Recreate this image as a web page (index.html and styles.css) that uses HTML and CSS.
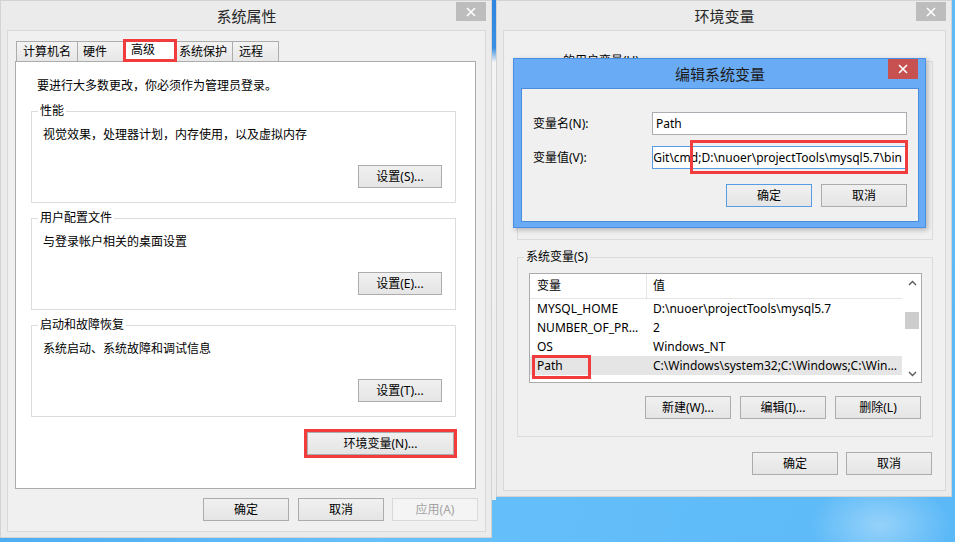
FILE: index.html
```html
<!DOCTYPE html>
<html lang="zh-CN">
<head>
    <meta charset="UTF-8">
    <title>系统属性 - 环境变量</title>
    <link rel="stylesheet" href="styles.css">
</head>
<body>

<div class="desktop">
    <div class="window sys-props">
        <div class="titlebar">系统属性
            <span class="close"><svg width="10" height="10" viewBox="0 0 10 10"><path d="M1 1L9 9M9 1L1 9" stroke="#fff" stroke-width="1.6"/></svg></span>
        </div>
        <div class="client sys-client">
            <div class="tabs">
                <div class="tab">计算机名</div>
                <div class="tab">硬件</div>
                <div class="tab active">高级</div>
                <div class="tab">系统保护</div>
                <div class="tab">远程</div>
            </div>
            <div class="tab-panel">
                <p class="notice">要进行大多数更改，你必须作为管理员登录。</p>
                <fieldset class="group">
                    <legend>性能</legend>
                    <p class="desc">视觉效果，处理器计划，内存使用，以及虚拟内存</p>
                    <div class="group-actions"><button class="btn">设置(S)...</button></div>
                </fieldset>
                <fieldset class="group">
                    <legend>用户配置文件</legend>
                    <p class="desc">与登录帐户相关的桌面设置</p>
                    <div class="group-actions"><button class="btn">设置(E)...</button></div>
                </fieldset>
                <fieldset class="group">
                    <legend>启动和故障恢复</legend>
                    <p class="desc">系统启动、系统故障和调试信息</p>
                    <div class="group-actions"><button class="btn">设置(T)...</button></div>
                </fieldset>
                <div class="env-row"><button class="btn btn-env">环境变量(N)...</button></div>
            </div>
            <div class="button-row">
                <button class="btn">确定</button>
                <button class="btn">取消</button>
                <button class="btn" disabled>应用(A)</button>
            </div>
        </div>
    </div>

    <div class="gap"></div>

    <div class="window env-vars">
        <div class="titlebar">环境变量
            <span class="close"><svg width="10" height="10" viewBox="0 0 10 10"><path d="M1 1L9 9M9 1L1 9" stroke="#fff" stroke-width="1.6"/></svg></span>
        </div>
        <div class="client env-client">
            <fieldset class="group user-group">
                <legend>nuoer 的用户变量(U)</legend>
            </fieldset>
            <fieldset class="group sys-group">
                <legend>系统变量(S)</legend>
                <div class="list">
                    <div class="list-body">
                        <div class="list-head"><span class="col-name">变量</span><span class="col-value">值</span></div>
                        <div class="list-row"><span class="col-name">MYSQL_HOME</span><span class="col-value">D:\nuoer\projectTools\mysql5.7</span></div>
                        <div class="list-row"><span class="col-name">NUMBER_OF_PROCESSORS</span><span class="col-value">2</span></div>
                        <div class="list-row"><span class="col-name">OS</span><span class="col-value">Windows_NT</span></div>
                        <div class="list-row selected"><span class="col-name">Path</span><span class="col-value">C:\Windows\system32;C:\Windows;C:\Windows\System32\Wbem</span></div>
                    </div>
                    <div class="scrollbar">
                        <div class="sb-btn"><svg width="9" height="6" viewBox="0 0 9 6"><polyline points="1,5 4.5,1.5 8,5" fill="none" stroke="#5a5a5a" stroke-width="1.4"/></svg></div>
                        <div class="sb-track"><div class="sb-thumb"></div></div>
                        <div class="sb-btn"><svg width="9" height="6" viewBox="0 0 9 6"><polyline points="1,1 4.5,4.5 8,1" fill="none" stroke="#5a5a5a" stroke-width="1.4"/></svg></div>
                    </div>
                    <div class="mark-box path-mark"></div>
                </div>
                <div class="button-row list-actions">
                    <button class="btn">新建(W)...</button>
                    <button class="btn">编辑(I)...</button>
                    <button class="btn">删除(L)</button>
                </div>
            </fieldset>
            <div class="button-row env-buttons">
                <button class="btn">确定</button>
                <button class="btn">取消</button>
            </div>
        </div>

        <div class="edit-dialog">
            <div class="titlebar">编辑系统变量
                <span class="close close-red"><svg width="10" height="10" viewBox="0 0 10 10"><path d="M1 1L9 9M9 1L1 9" stroke="#fff" stroke-width="1.6"/></svg></span>
            </div>
            <div class="client dialog-client">
                <div class="form-row">
                    <label>变量名(N):</label>
                    <div class="field">Path</div>
                </div>
                <div class="form-row">
                    <label>变量值(V):</label>
                    <div class="field field-focus"><span>\Git\cmd;D:\nuoer\projectTools\mysql5.7\bin</span></div>
                </div>
                <div class="button-row dialog-buttons">
                    <button class="btn btn-default">确定</button>
                    <button class="btn">取消</button>
                </div>
            </div>
            <div class="mark-box value-mark"></div>
        </div>
    </div>
</div>

</body>
</html>
```

FILE: styles.css
```css
* {
    box-sizing: border-box;
}
html, body {
    margin: 0;
}
body {
    width: 955px;
    height: 542px;
    overflow: hidden;
    font-family: "Noto Sans", "Noto Sans CJK SC", sans-serif;
    font-size: 12px;
    line-height: 16px;
    color: #000;
    background:
        radial-gradient(ellipse 70px 45px at 880px 525px, rgba(255, 255, 255, 0.35), transparent),
        linear-gradient(100deg, #47a9f0 0%, #66c0fa 45%, #5cb9f7 100%);
}
.desktop {
    display: flex;
    align-items: flex-start;
}
.window {
    background: #ebebeb;
    border: 1px solid #d3d3d3;
    padding: 0 5px 5px 6px;
    display: flex;
    flex-direction: column;
    position: relative;
}
.sys-props {
    width: 492px;
    height: 538px;
}
.env-vars {
    width: 456px;
    height: 497px;
}
.gap {
    width: 4px;
    height: 500px;
    background: linear-gradient(#2f86e0 0, #3a8fe4 48px, #f4f4f4 62px, #ececec 100%);
}
.titlebar {
    height: 29px;
    flex: none;
    display: flex;
    align-items: center;
    justify-content: center;
    font-size: 15px;
    color: #262626;
    position: relative;
}
.close {
    position: absolute;
    top: 1px;
    right: 0;
    width: 30px;
    height: 19px;
    background: #bdbdbd;
    display: flex;
    align-items: center;
    justify-content: center;
}
.close-red {
    top: 0;
    height: 20px;
    background: #c75050;
}
.client {
    flex: 1;
    border: 1px solid #d9d9d9;
    background: #f0f0f0;
    display: flex;
    flex-direction: column;
}
p {
    margin: 0;
}

/* buttons */
.btn {
    width: 86px;
    height: 23px;
    padding: 0;
    font: inherit;
    color: #000;
    border: 1px solid #acacac;
    background: linear-gradient(#f0f0f0, #e5e5e5);
}
.btn:disabled {
    color: #a3a3a3;
    border-color: #d9d9d9;
    background: #f4f4f4;
}
.btn-default {
    border-color: #569de5;
}
.button-row {
    display: flex;
    justify-content: flex-end;
    gap: 9px;
}

/* system properties */
.sys-client {
    padding: 8px 9px 10px 7px;
}
.tabs {
    display: flex;
    align-items: flex-end;
    height: 22px;
    margin-left: 1px;
}
.tab {
    height: 20px;
    border: 1px solid #acacac;
    border-bottom: none;
    margin-right: -1px;
    padding: 0 6px;
    line-height: 19px;
    white-space: nowrap;
    overflow: hidden;
    background: linear-gradient(#f3f3f3, #e7e7e7);
}
.tab:nth-child(1) { width: 62px; }
.tab:nth-child(2) { width: 47px; padding-left: 5px; }
.tab:nth-child(4) { width: 57px; padding-left: 2px; }
.tab:nth-child(5) { width: 47px; }
.tab.active {
    width: 54px;
    height: 23px;
    margin-bottom: -1px;
    padding-left: 7px;
    line-height: 20px;
    background: #fff;
    position: relative;
    z-index: 1;
    outline: 3px solid #f03c3c;
    outline-offset: -3px;
}
.tab-panel {
    flex: 1;
    border: 1px solid #acacac;
    background: #fff;
    padding: 16px 19px 0 15px;
}
.notice {
    margin: 0 0 9px 6px;
}
.group {
    margin: 0 0 7px;
    border: 1px solid #dcdcdc;
    padding: 8px 13px 14px 11px;
}
.group legend {
    padding: 0 2px;
    margin-left: -5px;
    line-height: 16px;
}
.group-actions {
    display: flex;
    justify-content: flex-end;
    margin-top: 22px;
}
.group-actions .btn {
    width: 84px;
}
.env-row {
    display: flex;
    justify-content: flex-end;
    margin-top: 15px;
    padding-right: 2px;
}
.btn-env {
    width: 147px;
    outline: 3px solid #f03c3c;
}
.sys-client .button-row {
    margin-top: 9px;
    margin-right: -2px;
}
.sys-client .button-row .btn:nth-child(2) {
    margin-right: -1px;
}

/* environment variables */
.env-client {
    padding: 22px 12px 0 13px;
}
.user-group {
    height: 187px;
    margin: 0;
}
.sys-group {
    margin: 9px 0 0;
    padding: 8px 10px 17px 11px;
}
.list {
    height: 110px;
    border: 1px solid #ababab;
    background: #fff;
    display: flex;
    position: relative;
}
.list-body {
    flex: 1;
    overflow: hidden;
}
.list-head,
.list-row {
    display: grid;
    grid-template-columns: 117px 1fr;
    margin-right: 2px;
}
.list-head {
    height: 25px;
    line-height: 24px;
    border-bottom: 1px solid #e5e5e5;
}
.list-head .col-name {
    border-right: 1px solid #e5e5e5;
}
.list-row {
    height: 19px;
    line-height: 19px;
}
.list-row.selected {
    background: #e5e5e5;
}
.col-name,
.col-value {
    white-space: nowrap;
    overflow: hidden;
    text-overflow: ellipsis;
}
.col-name {
    padding: 0 5px 0 7px;
}
.col-value {
    padding: 0 2px 0 6px;
}
.scrollbar {
    width: 17px;
    display: flex;
    flex-direction: column;
}
.sb-btn {
    height: 17px;
    display: flex;
    align-items: center;
    justify-content: center;
}
.sb-track {
    flex: 1;
}
.sb-thumb {
    height: 17px;
    margin: 21px 2px 0 1px;
    background: #cdcdcd;
}
.list-actions {
    margin-top: 13px;
    margin-right: 1px;
}
.env-buttons {
    margin-top: 15px;
    margin-right: 1px;
    gap: 8px;
}
.mark-box {
    position: absolute;
    border: 3px solid #f03c3c;
}
.path-mark {
    left: 2px;
    top: 81px;
    width: 59px;
    height: 24px;
}

/* edit dialog */
.edit-dialog {
    position: absolute;
    left: 16px;
    top: 57px;
    width: 413px;
    height: 170px;
    border: 1px solid #4a8fe3;
    background: #6aabf5;
    padding: 0 6px 5px 7px;
    display: flex;
    flex-direction: column;
    box-shadow: 2px 2px 5px rgba(0, 0, 0, 0.25);
    z-index: 2;
}
.edit-dialog .titlebar {
    color: #1c1c1c;
}
.edit-dialog .close {
    right: 1px;
}
.dialog-client {
    border-color: #4b8cdb;
    padding: 23px 11px 0 11px;
}
.form-row {
    display: flex;
    align-items: center;
    height: 23px;
}
.form-row + .form-row {
    margin-top: 11px;
}
.form-row label {
    width: 119px;
}
.field {
    flex: 1;
    height: 23px;
    border: 1px solid #abadb3;
    background: #fff;
    padding: 0 3px;
    line-height: 21px;
    white-space: nowrap;
    overflow: hidden;
}
.field-focus {
    border-color: #569de5;
    display: flex;
    justify-content: flex-end;
    padding-right: 4px;
}
.dialog-buttons {
    margin-top: 15px;
}
.value-mark {
    left: 176px;
    top: 81px;
    width: 218px;
    height: 34px;
}
```
